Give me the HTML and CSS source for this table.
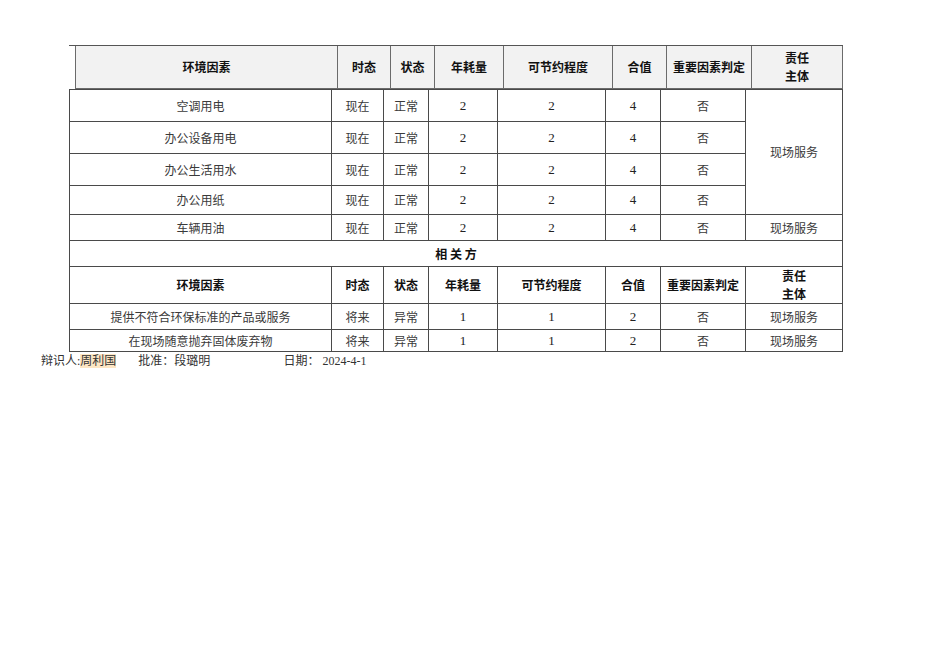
FILE: index.html
```html
<!DOCTYPE html>
<html lang="zh-CN">
<head>
<meta charset="utf-8">
<title>环境因素识别表</title>
<link rel="stylesheet" href="styles.css">
</head>
<body>
<div class="page">
  <div class="sheet">
    <div class="head-wrap">
      <table class="head-table">
        <colgroup>
          <col class="c1h"><col class="c2h"><col class="c3h"><col class="c4h"><col class="c5h"><col class="c6h"><col class="c7h"><col class="c8h">
        </colgroup>
        <tr>
          <th>环境因素</th><th>时态</th><th>状态</th><th>年耗量</th><th>可节约程度</th><th>合值</th><th>重要因素判定</th><th>责任<br>主体</th>
        </tr>
      </table>
    </div>
    <table class="body-table">
      <colgroup>
        <col class="c1"><col class="c2"><col class="c3"><col class="c4"><col class="c5"><col class="c6"><col class="c7"><col class="c8">
      </colgroup>
      <tr class="r32"><td>空调用电</td><td>现在</td><td>正常</td><td class="num">2</td><td class="num">2</td><td class="num">4</td><td>否</td><td rowspan="4">现场服务</td></tr>
      <tr class="r32"><td>办公设备用电</td><td>现在</td><td>正常</td><td class="num">2</td><td class="num">2</td><td class="num">4</td><td>否</td></tr>
      <tr class="r32"><td>办公生活用水</td><td>现在</td><td>正常</td><td class="num">2</td><td class="num">2</td><td class="num">4</td><td>否</td></tr>
      <tr class="r29"><td>办公用纸</td><td>现在</td><td>正常</td><td class="num">2</td><td class="num">2</td><td class="num">4</td><td>否</td></tr>
      <tr class="r26"><td>车辆用油</td><td>现在</td><td>正常</td><td class="num">2</td><td class="num">2</td><td class="num">4</td><td>否</td><td>现场服务</td></tr>
      <tr class="r26"><td colspan="8" class="section">相 关 方</td></tr>
      <tr class="r36 sub-head"><td>环境因素</td><td>时态</td><td>状态</td><td>年耗量</td><td>可节约程度</td><td>合值</td><td>重要因素判定</td><td>责任<br>主体</td></tr>
      <tr class="r26"><td>提供不符合环保标准的产品或服务</td><td>将来</td><td>异常</td><td class="num">1</td><td class="num">1</td><td class="num">2</td><td>否</td><td>现场服务</td></tr>
      <tr class="r22"><td>在现场随意抛弃固体废弃物</td><td>将来</td><td>异常</td><td class="num">1</td><td class="num">1</td><td class="num">2</td><td>否</td><td>现场服务</td></tr>
    </table>
  </div>
  <div class="footer">
    <span class="f-ident">辩识人:<span class="hl">周利国</span></span>
    <span class="f-approve">批准：段璐明</span>
    <span class="f-date">日期：</span>
    <span class="f-date-val">2024-4-1</span>
  </div>
</div>
</body>
</html>
```

FILE: styles.css
```css
html, body {
  margin: 0;
  padding: 0;
  background: #ffffff;
}

body {
  font-family: "Liberation Serif", "Noto Sans CJK SC", serif;
  font-size: 12px;
  color: #333333;
}

.page {
  padding-top: 45px;
}

.sheet {
  margin-left: 69px;
  width: 774px;
}

.head-wrap {
  border-top: 1px solid #555555;
  padding-left: 6px;
}

table {
  border-collapse: collapse;
  table-layout: fixed;
}

.head-table {
  width: 768px;
}

.head-table th {
  background: #f2f2f2;
  border: 1px solid #6b6b6b;
  border-top: none;
  height: 42px;
  padding: 0;
  font-family: "Noto Sans CJK SC", "Liberation Sans", sans-serif;
  font-weight: 700;
  font-size: 12px;
  line-height: 18px;
  color: #111111;
  text-align: center;
  vertical-align: middle;
}

.c1h { width: 262px; }
.c2h { width: 53px; }
.c3h { width: 44px; }
.c4h { width: 69px; }
.c5h { width: 109px; }
.c6h { width: 54px; }
.c7h { width: 85px; }
.c8h { width: 91px; }

.body-table {
  width: 774px;
}

.c1 { width: 262px; }
.c2 { width: 52px; }
.c3 { width: 45px; }
.c4 { width: 69px; }
.c5 { width: 108px; }
.c6 { width: 55px; }
.c7 { width: 85px; }
.c8 { width: 97px; }

.body-table td {
  border: 1px solid #4a4a4a;
  padding: 0;
  text-align: center;
  vertical-align: middle;
  font-family: "Noto Sans CJK SC", "Liberation Serif", serif;
  font-weight: 400;
  font-size: 12px;
  line-height: 16px;
  color: #3a3a3a;
}

.body-table td.num {
  font-family: "Liberation Serif", serif;
  font-size: 13px;
  color: #222222;
}

.r32 { height: 32px; }
.r29 { height: 29px; }
.r26 { height: 26px; }
.r36 { height: 36px; }
.r22 { height: 22px; }

.body-table td.section {
  font-family: "Noto Sans CJK SC", "Liberation Sans", sans-serif;
  font-weight: 700;
  color: #111111;
}

.sub-head td {
  font-family: "Noto Sans CJK SC", "Liberation Sans", sans-serif;
  font-weight: 700 !important;
  color: #111111 !important;
  line-height: 18px !important;
}

.footer {
  display: flex;
  align-items: center;
  margin-left: 41px;
  height: 18px;
  line-height: 18px;
  font-family: "Liberation Serif", "Noto Sans CJK SC", serif;
  font-size: 12px;
  color: #333333;
}

.hl {
  background: #fde6c4;
}

.f-approve {
  margin-left: 22px;
}

.f-date {
  margin-left: 73px;
}

.f-date-val {
  margin-left: 3px;
}
```
